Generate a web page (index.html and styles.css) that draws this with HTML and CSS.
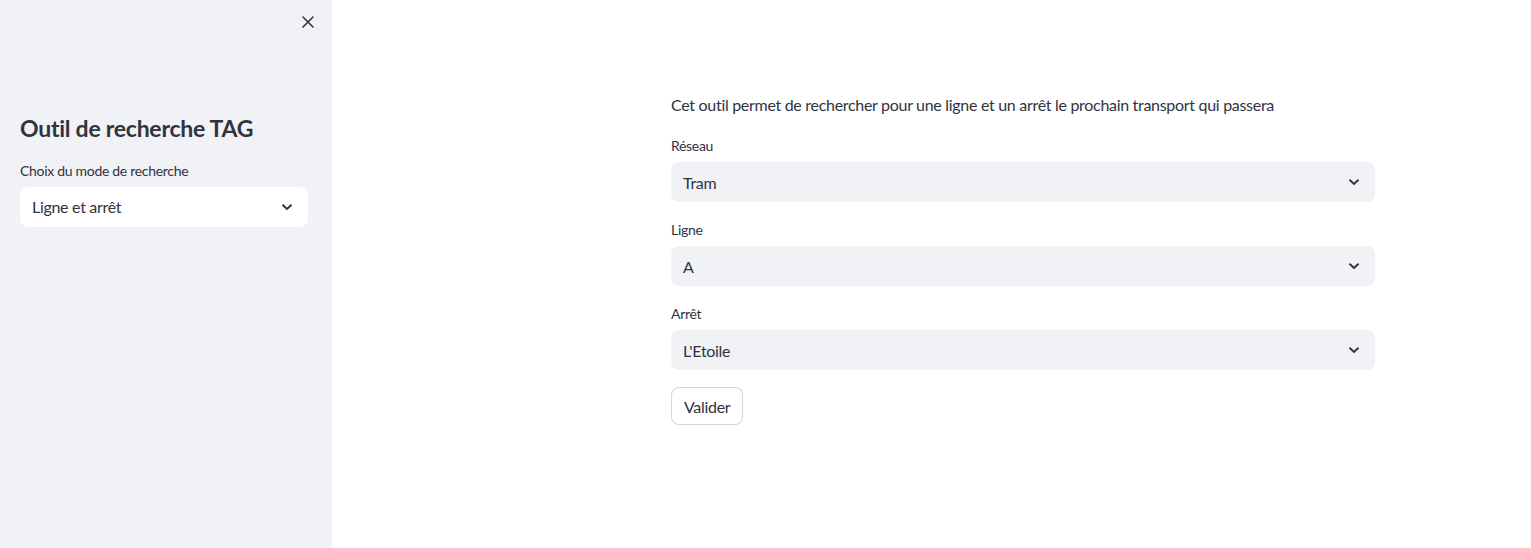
FILE: index.html
```html
<!DOCTYPE html>
<html lang="fr">
<head>
<meta charset="utf-8">
<title>Outil de recherche TAG</title>
<link rel="stylesheet" href="styles.css">
</head>
<body>
<div class="app">
  <aside class="sidebar">
    <div class="sidebar-header">
      <button class="close-btn" aria-label="Fermer">
        <svg width="14" height="14" viewBox="0 0 14 14"><path d="M2 2 L12 12 M12 2 L2 12" stroke="#31333f" stroke-width="1.6" stroke-linecap="round" fill="none"/></svg>
      </button>
    </div>
    <div class="sidebar-content">
      <h1 class="sidebar-title">Outil de recherche TAG</h1>
      <div class="field">
        <label class="field-label">Choix du mode de recherche</label>
        <div class="select select-white">
          <span class="select-value">Ligne et arrêt</span>
          <svg class="chevron" width="12" height="8" viewBox="0 0 12 8"><path d="M1.5 1.8 L6 6 L10.5 1.8" stroke="#31333f" stroke-width="2" fill="none" stroke-linejoin="miter"/></svg>
        </div>
      </div>
    </div>
  </aside>
  <main class="main">
    <div class="block">
      <p class="intro">Cet outil permet de rechercher pour une ligne et un arrêt le prochain transport qui passera</p>
      <div class="field">
        <label class="field-label">Réseau</label>
        <div class="select">
          <span class="select-value">Tram</span>
          <svg class="chevron" width="12" height="8" viewBox="0 0 12 8"><path d="M1.5 1.8 L6 6 L10.5 1.8" stroke="#31333f" stroke-width="2" fill="none"/></svg>
        </div>
      </div>
      <div class="field">
        <label class="field-label">Ligne</label>
        <div class="select">
          <span class="select-value">A</span>
          <svg class="chevron" width="12" height="8" viewBox="0 0 12 8"><path d="M1.5 1.8 L6 6 L10.5 1.8" stroke="#31333f" stroke-width="2" fill="none"/></svg>
        </div>
      </div>
      <div class="field">
        <label class="field-label">Arrêt</label>
        <div class="select">
          <span class="select-value">L'Etoile</span>
          <svg class="chevron" width="12" height="8" viewBox="0 0 12 8"><path d="M1.5 1.8 L6 6 L10.5 1.8" stroke="#31333f" stroke-width="2" fill="none"/></svg>
        </div>
      </div>
      <div class="actions">
        <button class="btn">Valider</button>
      </div>
    </div>
  </main>
</div>
</body>
</html>
```
FILE: styles.css
```css
* { box-sizing: border-box; }
html, body { margin: 0; padding: 0; }
body {
  font-family: Lato, "Open Sans", sans-serif;
  color: #31333f;
  background: #ffffff;
  letter-spacing: -0.3px;
}
.app {
  display: flex;
  height: 548px;
}
.sidebar {
  width: 332px;
  flex: 0 0 332px;
  background: #f0f2f6;
  display: flex;
  flex-direction: column;
}
.sidebar-header {
  display: flex;
  justify-content: flex-end;
  padding: 15px 17px 0 0;
}
.close-btn {
  border: none;
  background: transparent;
  padding: 0;
  width: 14px;
  height: 14px;
  display: flex;
  cursor: pointer;
}
.sidebar-content {
  padding: 0 24px 0 20px;
  display: flex;
  flex-direction: column;
  gap: 16px;
}
.sidebar-title {
  margin: 86px 0 0 0;
  font-size: 23px;
  font-weight: 700;
  line-height: 1.2;
  letter-spacing: -0.25px;
}
.main {
  flex: 1;
  padding: 92px 156px 0 339px;
}
.block {
  display: flex;
  flex-direction: column;
  gap: 16px;
}
.intro {
  margin: 0;
  font-size: 16px;
  line-height: 26px;
}
.field {
  display: flex;
  flex-direction: column;
}
.field-label {
  font-size: 14px;
  line-height: 24px;
  height: 24px;
  margin-bottom: 4px;
}
.select {
  height: 40px;
  background: #f0f2f6;
  border-radius: 8px;
  display: flex;
  align-items: center;
  justify-content: space-between;
  padding: 0 15px 0 12px;
  font-size: 16px;
}
.select-white { background: #ffffff; }
.chevron { display: block; }
.actions { display: flex; padding-top: 1px; }
.btn {
  font-family: inherit;
  font-size: 16px;
  letter-spacing: inherit;
  color: #31333f;
  background: #ffffff;
  border: 1px solid rgba(49, 51, 63, 0.2);
  border-radius: 8px;
  height: 38px;
  padding: 0 12px;
}
```
